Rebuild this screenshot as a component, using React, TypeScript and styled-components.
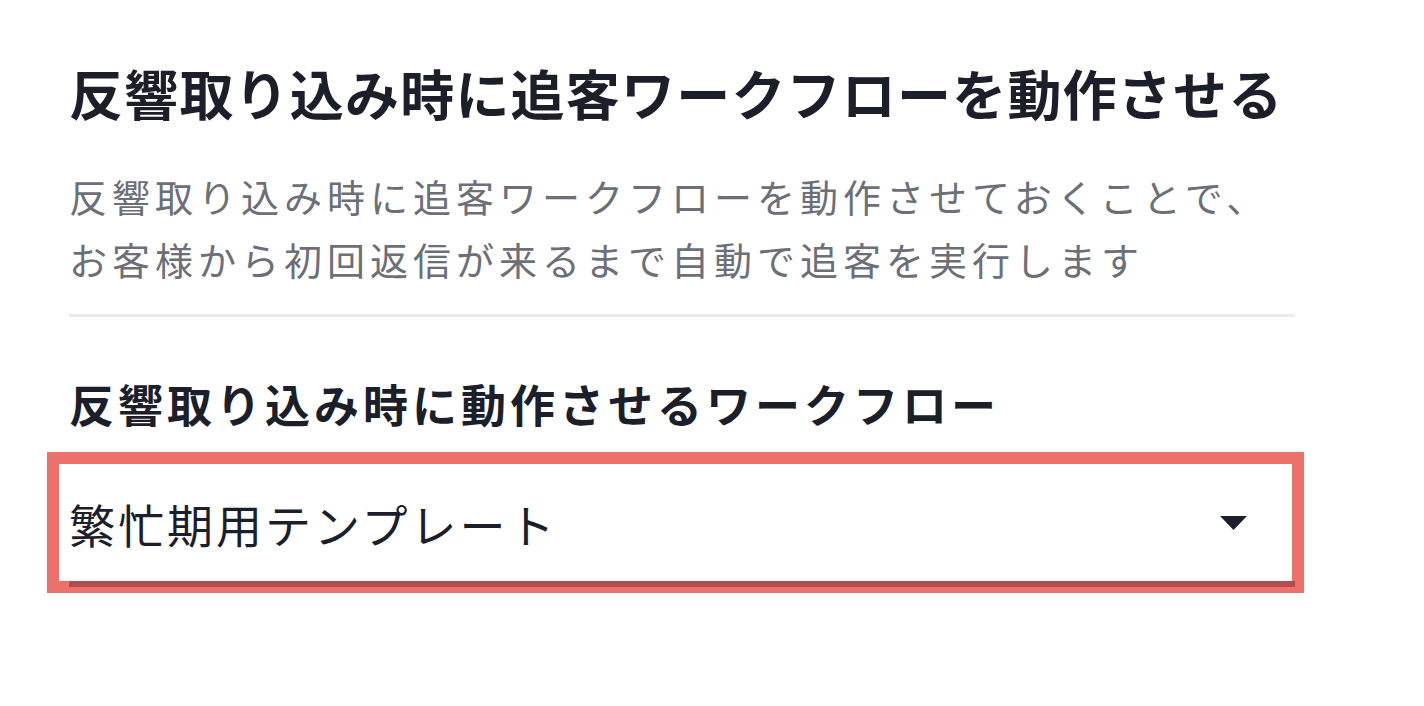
import styled, { createGlobalStyle } from 'styled-components';

const COLORS = {
  ink: '#1c1f29',
  muted: '#6c6f77',
  divider: '#e9ecef',
  highlight: '#ee706b',
  underline: '#b34c50',
};

const GlobalStyle = createGlobalStyle`
  html, body {
    margin: 0;
    padding: 0;
    background: #ffffff;
  }

  body {
    font-family: 'Noto Sans CJK JP', 'Noto Sans', sans-serif;
    color: ${COLORS.ink};
  }
`;

export default function App() {
  return (
    <>
      <GlobalStyle />
      <Page>
        <Title>反響取り込み時に追客ワークフローを動作させる</Title>
        <Description>
          反響取り込み時に追客ワークフローを動作させておくことで、
          <br />
          お客様から初回返信が来るまで自動で追客を実行します
        </Description>
        <Divider />
        <FieldLabel>反響取り込み時に動作させるワークフロー</FieldLabel>
        <Highlight>
          <Select>
            <SelectValue>繁忙期用テンプレート</SelectValue>
            <Caret viewBox='0 0 27 14' width={27} height={14}>
              <polygon points='0,0 27,0 13.5,14' fill={COLORS.ink} />
            </Caret>
          </Select>
        </Highlight>
      </Page>
    </>
  );
}

const Page = styled.main`
  width: 1226px;
  padding: 58px 0 0 69px;

  display: flex;
  flex-direction: column;
`;

const Title = styled.h1`
  margin: 0;

  font-size: 54px;
  font-weight: 700;
  line-height: 70px;
  letter-spacing: 1.2px;
  white-space: nowrap;
`;

const Description = styled.p`
  margin: 36px 0 0;

  color: ${COLORS.muted};
  font-size: 38px;
  font-weight: 400;
  line-height: 63px;
  letter-spacing: 5px;
  white-space: nowrap;
`;

const Divider = styled.hr`
  margin: 24px 0 0;
  height: 3px;

  border: none;
  background-color: ${COLORS.divider};
`;

const FieldLabel = styled.h2`
  margin: 57px 0 0;

  font-size: 45px;
  font-weight: 700;
  line-height: 60px;
  letter-spacing: 4px;
  white-space: nowrap;
`;

const Highlight = styled.div`
  margin: 18px 0 0 -22px;
  width: 1257px;
  padding-left: 10px;

  border: 12px solid ${COLORS.highlight};
  box-sizing: border-box;
  background: #ffffff;
`;

const Select = styled.div`
  height: 117px;
  margin: 0 -3px -6px 0;

  display: flex;
  align-items: center;
  justify-content: space-between;
  padding-right: 48px;

  border-bottom: 6px solid ${COLORS.underline};
`;

const SelectValue = styled.span`
  font-size: 46px;
  font-weight: 400;
  letter-spacing: 3px;
  color: ${COLORS.ink};
`;

const Caret = styled.svg`
  display: block;
  flex-shrink: 0;
`;
